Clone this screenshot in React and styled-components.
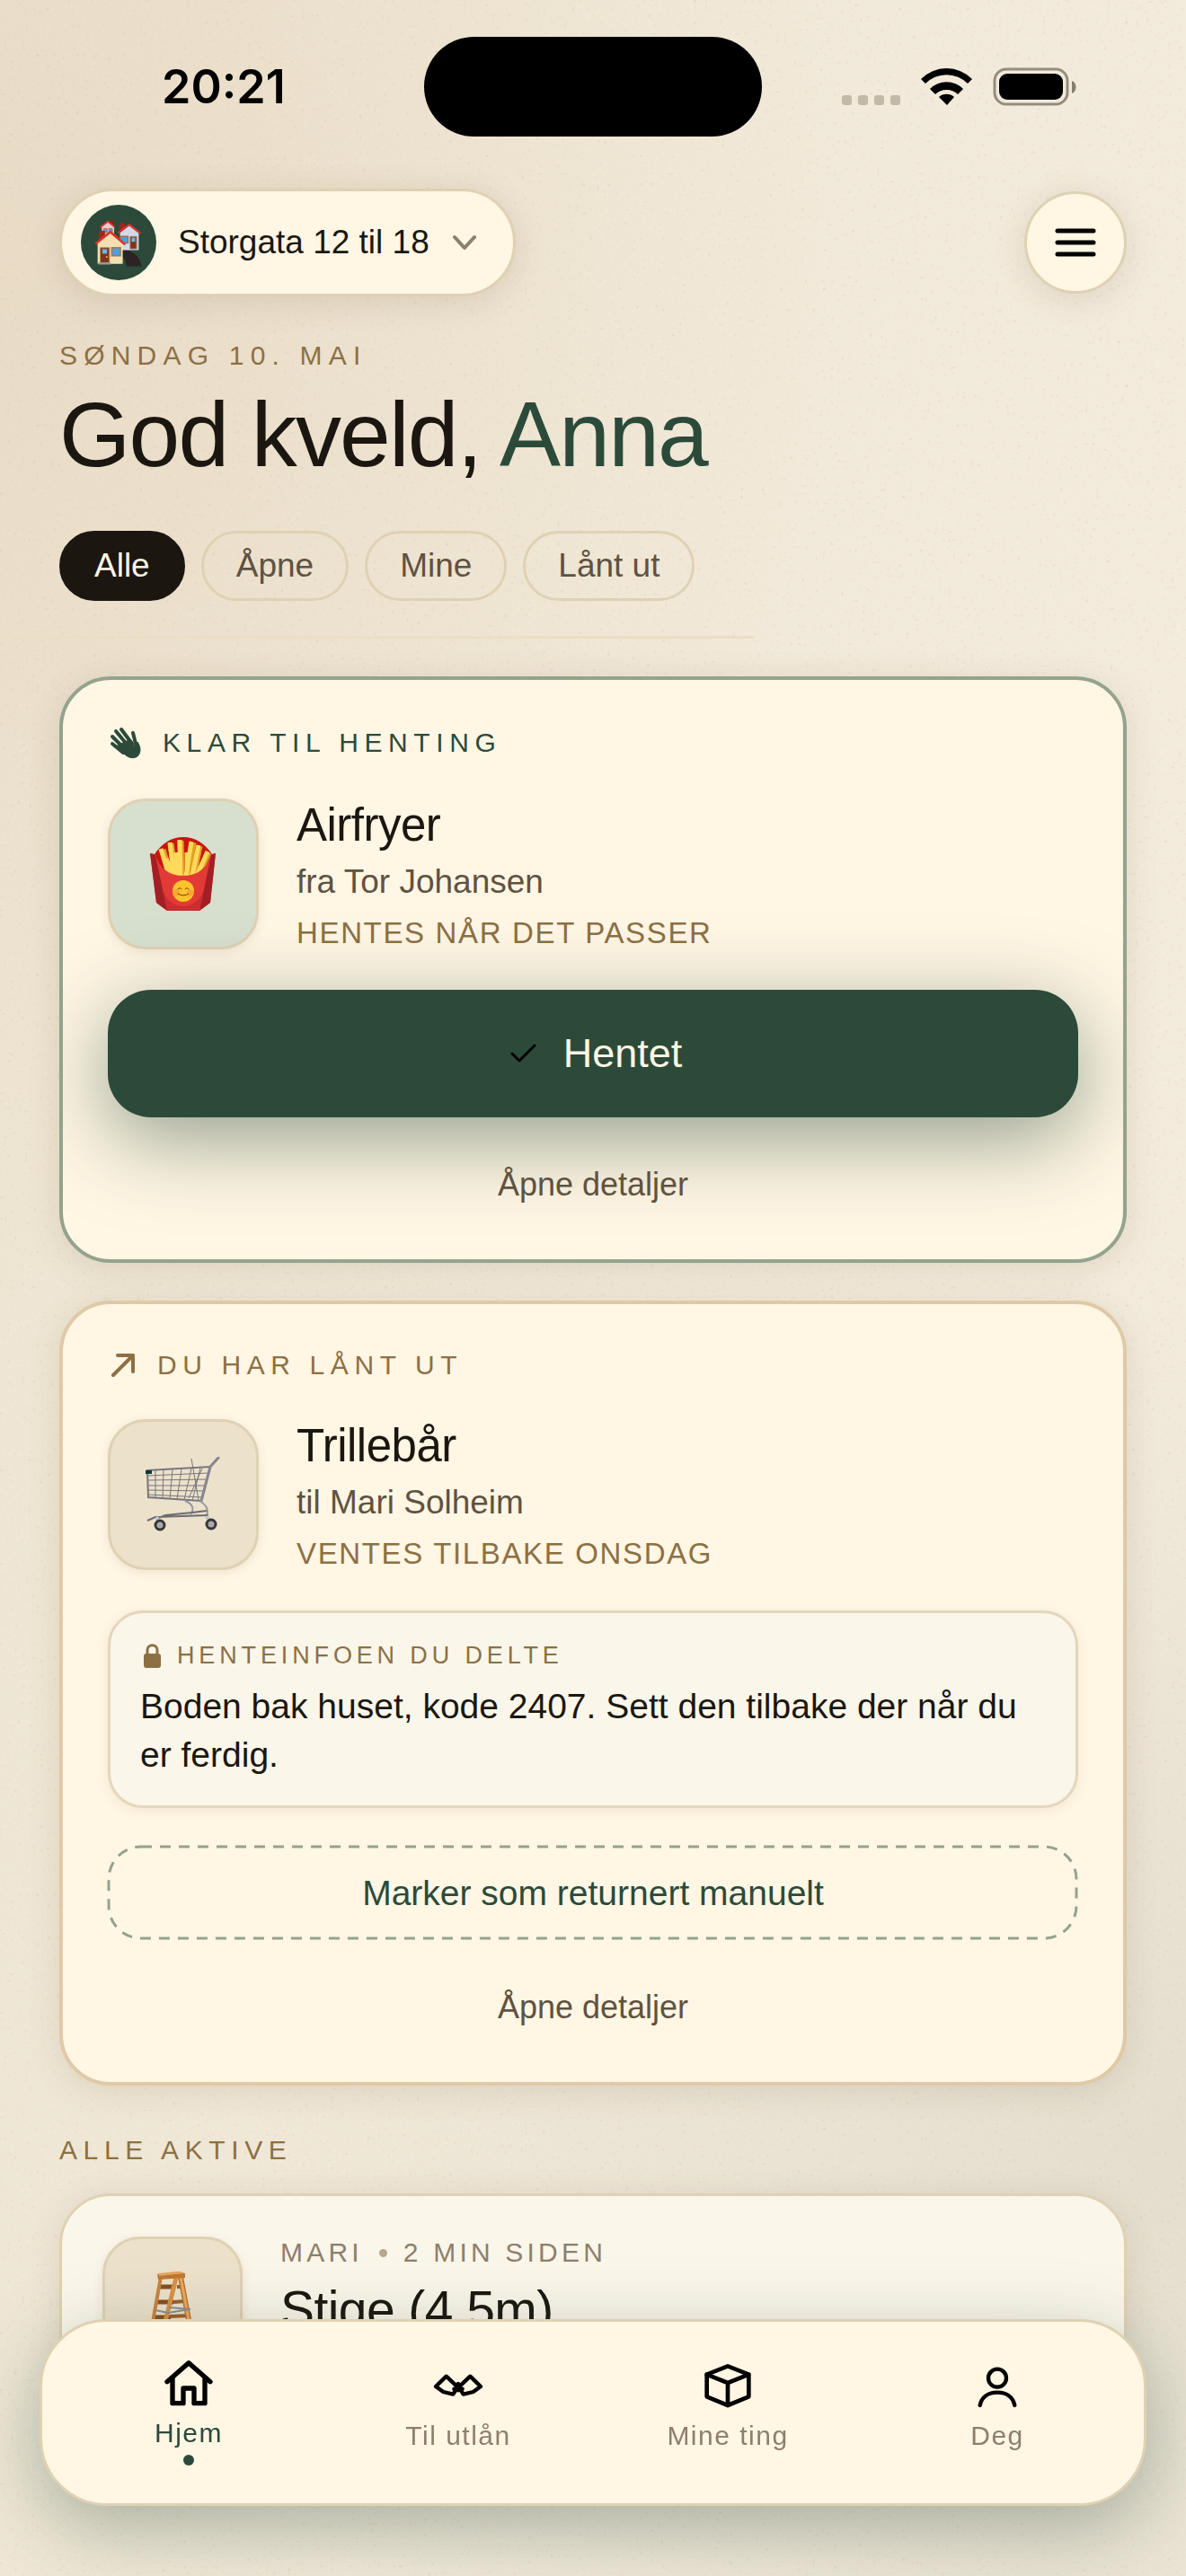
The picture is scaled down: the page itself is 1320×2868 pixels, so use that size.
import React, { useState } from "react";
import styled, { createGlobalStyle } from "styled-components";

const ink = "#1b1710";
const green = "#2c4a3a";
const bronze = "#8c7044";
const soft = "#5f5241";
const faded = "#8e7f6b";
const cream = "#fff6e4";
const paper = "#fbf6ea";
const sand = "#dfd1b3";

const GlobalStyle = createGlobalStyle`
  * {
    box-sizing: border-box;
  }

  body {
    margin: 0;
    background: #f2eada;
    color: ${ink};
    font-family: "Liberation Sans", Arial, sans-serif;
  }

  h1, h2, h3, p {
    margin: 0;
    font-weight: 400;
  }

  button {
    font-family: inherit;
    cursor: pointer;
  }
`;

const Page = styled.div`
  position: relative;
  isolation: isolate;
  min-height: 100vh;
  padding-bottom: 150px;
  overflow: hidden;
  background:
    radial-gradient(ellipse 70% 42% at 0% 10%, rgba(216, 180, 150, 0.2), transparent),
    radial-gradient(ellipse 80% 34% at 100% 84%, rgba(128, 134, 112, 0.13), transparent),
    linear-gradient(100deg, #ede5d2, #f3ebdc 75%);
`;

const Grain = styled.svg`
  position: absolute;
  inset: 0;
  z-index: -1;
  width: 100%;
  height: 100%;
`;

const StatusBar = styled.div`
  display: grid;
  grid-template-columns: 1fr 376px 1fr;
  align-items: center;
  padding-top: 41px;
`;

const Clock = styled.time`
  padding-left: 180px;
  color: #000;
  font-family: Inter, sans-serif;
  font-size: 52px;
  font-weight: 600;
  line-height: 60px;
`;

const Island = styled.div`
  height: 111px;
  border-radius: 56px;
  background: #000;
`;

const StatusIcons = styled.svg`
  justify-self: end;
  width: 264px;
  height: 45px;
  margin-right: 120px;
`;

const Header = styled.header`
  padding: 58px 66px 0;
`;

const TopRow = styled.div`
  display: flex;
  align-items: center;
  justify-content: space-between;
`;

const PlaceButton = styled.button`
  display: flex;
  align-items: center;
  height: 120px;
  padding: 0 36px 0 21px;
  border: 3px solid ${sand};
  border-radius: 60px;
  background: ${cream};
  color: ${ink};
  font-size: 37px;
  box-shadow: 0 6px 36px rgba(90, 70, 40, 0.14);
`;

const Avatar = styled.span`
  display: grid;
  place-items: center;
  width: 84px;
  height: 84px;
  margin-right: 24px;
  border-radius: 50%;
  background: ${green};
`;

const Chevron = styled.svg`
  width: 36px;
  height: 36px;
  margin-left: 21px;
`;

const MenuButton = styled.button`
  display: grid;
  place-items: center;
  width: 114px;
  height: 114px;
  padding: 0;
  border: 3px solid ${sand};
  border-radius: 50%;
  background: ${cream};
  box-shadow: 0 6px 36px rgba(90, 70, 40, 0.14);
`;

const Eyebrow = styled.p`
  color: ${({ $color }) => $color || bronze};
  font-size: 30px;
  line-height: 36px;
  letter-spacing: 0.22em;
  text-transform: uppercase;
`;

const DateLine = styled(Eyebrow)`
  margin-top: 48px;
  letter-spacing: 0.24em;
`;

const Greeting = styled.h1`
  margin-top: 14px;
  font-size: 102px;
  line-height: 112px;
  letter-spacing: -0.018em;

  span {
    color: ${green};
  }
`;

const Filters = styled.div`
  display: flex;
  gap: 18px;
  margin-top: 51px;
`;

const Chip = styled.button`
  height: 78px;
  padding: 0 36px;
  border: 3px solid ${({ $active }) => ($active ? ink : sand)};
  border-radius: 39px;
  background: ${({ $active }) => ($active ? ink : "transparent")};
  color: ${({ $active }) => ($active ? cream : soft)};
  font-size: 37px;
`;

const Rule = styled.hr`
  max-width: 840px;
  height: 3px;
  margin: 39px 0 0;
  border: 0;
  background: #eadec4;
`;

const Feed = styled.main`
  display: flex;
  flex-direction: column;
  gap: 42px;
  padding: 42px 66px 0;
`;

const Card = styled.article`
  display: flex;
  flex-direction: column;
  gap: 42px;
  padding: 50px;
  border: 4px solid ${({ $border }) => $border};
  border-radius: 57px;
  background: ${cream};
  box-shadow: 0 6px 36px rgba(90, 70, 40, 0.13);
  overflow: hidden;
`;

const CardLabel = styled.div`
  display: flex;
  align-items: center;
  gap: 21px;
`;

const ItemRow = styled.div`
  display: flex;
  align-items: flex-start;
  gap: 42px;
`;

const Tile = styled.div`
  display: grid;
  flex: none;
  place-items: center;
  width: ${({ $size }) => $size || 168}px;
  height: ${({ $size }) => $size || 168}px;
  border: 3px solid ${sand};
  border-radius: 42px;
  background: ${({ $bg }) => $bg || "#ece1cb"};
  box-shadow: 0 3px 12px rgba(90, 70, 40, 0.1);
`;

const ItemName = styled.h2`
  font-size: 51px;
  line-height: 60px;
  letter-spacing: -0.01em;
`;

const Person = styled.p`
  margin-top: 12px;
  color: ${soft};
  font-size: 37px;
  line-height: 42px;
`;

const Due = styled.p`
  margin-top: 15px;
  color: ${bronze};
  font-size: 33px;
  line-height: 42px;
  letter-spacing: 0.05em;
  text-transform: uppercase;
`;

const PrimaryButton = styled.button`
  display: flex;
  align-items: center;
  justify-content: center;
  gap: 24px;
  height: 142px;
  border: 0;
  border-radius: 48px;
  background: ${green};
  color: ${cream};
  font-size: 45px;
  box-shadow: 0 24px 90px rgba(44, 74, 58, 0.5);
`;

const DashedButton = styled.button`
  position: relative;
  height: 105px;
  padding: 0;
  border: 0;
  background: transparent;
  color: ${green};
  font-size: 39px;
`;

const DashedOutline = styled.svg`
  position: absolute;
  inset: 0;
  width: 100%;
  height: 100%;
  overflow: visible;

  rect {
    x: 1px;
    y: 1px;
    width: calc(100% - 3px);
    height: calc(100% - 3px);
  }
`;

const TextButton = styled.button`
  align-self: center;
  height: 66px;
  padding: 0 36px;
  border: 0;
  background: transparent;
  color: ${soft};
  font-size: 36px;
`;

const Note = styled.section`
  padding: 29px 33px;
  border: 3px solid #e4d6bc;
  border-radius: 39px;
  background: ${paper};
  box-shadow: 0 3px 15px rgba(90, 70, 40, 0.08);
`;

const NoteLabel = styled.h3`
  display: flex;
  align-items: center;
  gap: 14px;
  color: ${bronze};
  font-size: 27px;
  line-height: 36px;
  letter-spacing: 0.18em;
  text-transform: uppercase;
`;

const NoteText = styled.p`
  margin-top: 12px;
  font-size: 39px;
  line-height: 54px;
`;

const SectionLabel = styled(Eyebrow)`
  margin-top: 12px;
`;

const ListCard = styled.article`
  display: flex;
  align-items: flex-start;
  gap: 42px;
  margin-top: -12px;
  padding: 45px;
  border: 3px solid ${sand};
  border-radius: 57px;
  background: ${paper};
  box-shadow: 0 6px 36px rgba(90, 70, 40, 0.13);
`;

const Meta = styled.p`
  display: flex;
  align-items: center;
  gap: 18px;
  color: ${faded};
  font-size: 30px;
  line-height: 36px;
  letter-spacing: 0.14em;
  text-transform: uppercase;
`;

const Bullet = styled.i`
  width: 9px;
  height: 9px;
  border-radius: 50%;
  background: #b5a88f;
`;

const ListTitle = styled.h2`
  margin-top: 12px;
  font-size: 57px;
  line-height: 66px;
  letter-spacing: -0.01em;
`;

const TabBar = styled.nav`
  position: fixed;
  right: 44px;
  bottom: 78px;
  left: 44px;
  display: grid;
  grid-template-columns: repeat(4, 1fr);
  align-items: center;
  padding: 36px 13px 42px;
  border: 3px solid ${sand};
  border-radius: 75px;
  background: ${cream};
  box-shadow: 0 24px 84px rgba(44, 74, 58, 0.36);
`;

const Tab = styled.a`
  display: flex;
  flex-direction: column;
  align-items: center;
  gap: 6px;
  color: ${({ $active }) => ($active ? green : faded)};
  font-size: 30px;
  line-height: 36px;
  letter-spacing: 0.05em;
  text-decoration: none;

  &::after {
    content: "";
    width: 12px;
    height: ${({ $active }) => ($active ? 12 : 6)}px;
    border-radius: 50%;
    background: ${({ $active }) => ($active ? green : "transparent")};
  }
`;

const TabIcon = styled.svg`
  width: 64px;
  height: 64px;
  fill: none;
  stroke: #000;
  stroke-linecap: round;
  stroke-linejoin: round;
`;

const Houses = () => (
  <svg width="52" height="53" viewBox="138 132 158 160" aria-hidden="true">
    <path d="M230 234c34 2 62 26 64 57h-51c-2-18-6-28-16-34z" fill="#2b2325" />
    <path d="M190 136h11v24h-11z" fill="#8e1f1c" />
    <path d="M160 154l21-15 21 15v36h-42z" fill="#efc9c4" />
    <path d="M166 164h12v12h-12zM184 164h12v12h-12z" fill="#5a9fd4" stroke="#98705c" strokeWidth="3" />
    <path d="M155 159l26-20 22 18" fill="none" stroke="#d5332e" strokeWidth="6" />
    <path d="M221 145h17v25h-17z" fill="#a3231f" />
    <path d="M222 174l31-24 32 26v60h-63z" fill="#d4d9ea" />
    <path d="M223 190h26v22h-26z" fill="#4f9fdd" stroke="#92735c" strokeWidth="4" />
    <path d="M256 190h22v42h-22z" fill="#7f351c" stroke="#a98a6d" strokeWidth="3" />
    <path d="M261 194h12v14h-12z" fill="#67b7ec" />
    <path d="M216 178l37-28 38 30" fill="none" stroke="#d5332e" strokeWidth="7" />
    <path d="M150 171h21v27h-21z" fill="#a3231f" />
    <path d="M146 212l43-34 42 34v71h-85z" fill="#f4dfb0" />
    <path d="M155 228h31v52h-31z" fill="#7f351c" stroke="#ad8960" strokeWidth="3" />
    <path d="M162 233h16v15h-16z" fill="#67b7ec" />
    <circle cx="177" cy="259" r="3" fill="#f7c534" />
    <path d="M194 228h29v27h-29z" fill="#4f9fdd" stroke="#9b7b58" strokeWidth="5" />
    <path d="M148 278h42v7h-42z" fill="#a39c8e" />
    <path d="M139 215l50-40 50 42" fill="none" stroke="#d5332e" strokeWidth="8" />
  </svg>
);

const Fries = () => (
  <svg width="74" height="82" viewBox="0 0 74 82" aria-hidden="true">
    <path d="M5 19C13 7 24 0 37 0s24 7 32 19L56 48H18z" fill="#c9140f" />
    <g stroke="#e3a024" strokeWidth="7">
      <path d="M14 14l9 30M23 7l5 38M34 4l1 40M48 6l-6 38M55 10l-7 34M65 17L53 44" />
    </g>
    <g stroke="#ffd95a" strokeWidth="5">
      <path d="M12 13l9 30M22 6l5 38M33 3l1 40M46 5l-6 38M54 9l-7 34M64 16L52 43M18 24l8 20M29 17l2 26M41 17v26" />
    </g>
    <path d="M0 18l6 1c4 16 16 24 31 24s27-8 31-24l5-1-6 55-12 9H19L7 73z" fill="#e23a37" />
    <path d="M0 18l6 2 13 62L7 73zM73 18l-5 2-13 62 12-9z" fill="#a31f25" />
    <path d="M14 60l5 22h36l5-22c-6 12-14 17-23 17S20 72 14 60z" fill="#b8272b" opacity="0.6" />
    <circle cx="37" cy="60" r="12" fill="#fdc52c" />
    <circle cx="29" cy="62" r="4" fill="#ff923a" opacity="0.6" />
    <circle cx="45" cy="62" r="4" fill="#ff923a" opacity="0.6" />
    <path d="M31 58q2-3 4 0M39 58q2-3 4 0M31 63q6 4 12 0" fill="none" stroke="#7a3b0c" strokeWidth="1" strokeLinecap="round" />
  </svg>
);

const Cart = () => (
  <svg width="84" height="84" viewBox="0 0 84 84" fill="none" stroke="#77777b" aria-hidden="true">
    <path d="M2 15l70-4-10 38-59-4z" strokeWidth="2" />
    <path d="M2 21l68-3M2 26l67-1M2 32h65M3 37l63 1M3 42l61 3" strokeWidth="1" />
    <path d="M11 15v30M20 15l-1 31M30 14l-3 33M40 14l-5 33M51 13l-8 35M61 12l-9 37" strokeWidth="1" />
    <path d="M51 2l8 46M48 46l15-33" strokeWidth="1" />
    <path d="M62 49l10-38 9-10" strokeWidth="3" stroke="#86868b" strokeLinecap="round" />
    <path d="M44 49c8 3 11 9 6 15M60 49c9 5 10 10 8 18" strokeWidth="2" stroke="#96969b" />
    <path d="M2 71l9-4 59-2M12 69l10-4 30-3 16-2" strokeWidth="2" stroke="#6c6c70" />
    <path d="M12 67l4 8M68 66l5 9" strokeWidth="4" stroke="#c4c4c8" />
    <circle cx="16" cy="76" r="5" fill="#aaa" stroke="#38363a" strokeWidth="3" />
    <circle cx="73" cy="75" r="5" fill="#aaa" stroke="#38363a" strokeWidth="3" />
    <path d="M0 15h7v4H0z" fill="#123848" stroke="none" />
  </svg>
);

const Ladder = () => (
  <svg width="54" height="78" viewBox="0 0 54 78" fill="none" aria-hidden="true">
    <path d="M12 17h18M9 34h19M7 51h18M5 67h14" stroke="#855021" strokeWidth="5" />
    <path d="M32 17h7M28 34l14-1M24 50l22-1M20 66l28-1" stroke="#9a5f2a" strokeWidth="4" />
    <path d="M31 7L14 76" stroke="#d99246" strokeWidth="5" />
    <path d="M36 6l13 69" stroke="#b9752f" strokeWidth="6" />
    <path d="M36 6l13 69" stroke="#eda95a" strokeWidth="3" />
    <path d="M14 6L2 73" stroke="#c98340" strokeWidth="4" />
    <path d="M8 43l14 3 24-4M23 40l24 2" stroke="#8d8d8b" strokeWidth="2" />
    <path d="M10 3l24-3 7 2v5l-30 2z" fill="#bd7836" />
    <path d="M11 2l23-2 6 2-28 3z" fill="#e7a65b" />
  </svg>
);

const Hand = () => (
  <svg width="40" height="40" viewBox="0 0 40 40" fill="none" stroke={green} strokeLinecap="round" aria-hidden="true">
    <path d="M5 21l12 10M5 13l15 15M9 7l14 17M15 5l12 16" strokeWidth="4" />
    <path d="M28 9l4 16" strokeWidth="4" />
    <path d="M17 20l8-4c3 4 4 7 5 9l3-6c4 6 4 12 0 16-4 3-10 2-14-2-4-3-6-7-8-10z" fill={green} strokeWidth="1" strokeLinejoin="round" />
  </svg>
);

const Arrow = () => (
  <svg width="34" height="34" fill="none" stroke={bronze} strokeWidth="4" strokeLinecap="round" strokeLinejoin="round" aria-hidden="true">
    <path d="M6 28L28 6M11 6h17v18" />
  </svg>
);

const Lock = () => (
  <svg width="27" height="30" fill="none" aria-hidden="true">
    <path d="M8 14V9c0-7 11-7 11 0v5" stroke={bronze} strokeWidth="3" />
    <rect x="4" y="13" width="19" height="16" rx="3" fill={bronze} />
  </svg>
);

const tabs = [
  {
    label: "Hjem",
    icon: (
      <g strokeWidth="16">
        <path d="M24 92l72-63 72 63" />
        <path d="M42 80v84h36v-50h36v50h36V80" />
      </g>
    ),
  },
  {
    label: "Til utlån",
    icon: (
      <g strokeWidth="13">
        <path d="M21 99l35-34 38 36-15 24-33-8z" />
        <path d="M171 99l-35-34-38 36 15 24 33-8z" />
        <path d="M96 90v22M82 107h28" />
      </g>
    ),
  },
  {
    label: "Mine ting",
    icon: (
      <g strokeWidth="14">
        <path d="M96 31l70 28v74l-70 29-70-29V59z" />
        <path d="M26 59l70 28 70-28M96 87v75" />
      </g>
    ),
  },
  {
    label: "Deg",
    icon: (
      <g strokeWidth="13">
        <circle cx="96" cy="71" r="30" />
        <path d="M38 162c6-28 28-43 58-43s52 15 58 43" />
      </g>
    ),
  },
];

const filters = ["Alle", "Åpne", "Mine", "Lånt ut"];

const Item = ({ icon, bg, name, person, due }) => (
  <ItemRow>
    <Tile $bg={bg}>{icon}</Tile>
    <div>
      <ItemName>{name}</ItemName>
      <Person>{person}</Person>
      <Due>{due}</Due>
    </div>
  </ItemRow>
);

const App = () => {
  const [filter, setFilter] = useState("Alle");
  const [tab, setTab] = useState("Hjem");

  return (
    <Page>
      <GlobalStyle />
      <Grain aria-hidden="true">
        <filter id="grain">
          <feTurbulence type="fractalNoise" baseFrequency="0.25" numOctaves="2" seed="4" />
          <feColorMatrix values="0 0 0 0 0.5  0 0 0 0 0.42  0 0 0 0 0.3  0 0 0 4 -2.6" />
        </filter>
        <rect width="100%" height="100%" filter="url(#grain)" opacity="0.25" />
      </Grain>

      <StatusBar>
        <Clock>20:21</Clock>
        <Island />
        <StatusIcons viewBox="0 0 264 45" aria-hidden="true">
          <g fill="#c2b9a9">
            <rect x="1" y="32" width="11" height="11" rx="3" />
            <rect x="19" y="32" width="11" height="11" rx="3" />
            <rect x="37" y="32" width="11" height="11" rx="3" />
            <rect x="55" y="32" width="11" height="11" rx="3" />
          </g>
          <path d="M89 14a40 40 0 0 1 57 0l-5 5a33 33 0 0 0-47 0zM99 25a26 26 0 0 1 37 0l-6 6a18 18 0 0 0-25 0zM109 34a13 13 0 0 1 17 0l-8 9z" />
          <rect x="171" y="3" width="81" height="39" rx="13" fill="none" stroke="#938d80" strokeWidth="3" />
          <rect x="176" y="8" width="71" height="29" rx="9" />
          <path d="M257 16c6 2 6 12 0 14z" fill="#857f73" />
        </StatusIcons>
      </StatusBar>

      <Header>
        <TopRow>
          <PlaceButton>
            <Avatar>
              <Houses />
            </Avatar>
            Storgata 12 til 18
            <Chevron viewBox="0 0 36 36" fill="none" stroke={faded} strokeWidth="4" strokeLinecap="round" strokeLinejoin="round">
              <path d="M7 12l11 12 11-12" />
            </Chevron>
          </PlaceButton>
          <MenuButton aria-label="Meny">
            <svg width="48" height="36" stroke="#000" strokeWidth="5" strokeLinecap="round">
              <path d="M4 5h40M4 18h40M4 31h40" />
            </svg>
          </MenuButton>
        </TopRow>
        <DateLine>Søndag 10. mai</DateLine>
        <Greeting>
          God kveld, <span>Anna</span>
        </Greeting>
        <Filters>
          {filters.map((name) => (
            <Chip key={name} $active={name === filter} onClick={() => setFilter(name)}>
              {name}
            </Chip>
          ))}
        </Filters>
      </Header>
      <Rule />

      <Feed>
        <Card $border="#94a38e">
          <CardLabel>
            <Hand />
            <Eyebrow $color={green}>Klar til henting</Eyebrow>
          </CardLabel>
          <Item icon={<Fries />} bg="#d7dfcf" name="Airfryer" person="fra Tor Johansen" due="Hentes når det passer" />
          <PrimaryButton>
            <svg width="42" height="36" fill="none" stroke="#000" strokeWidth="3" strokeLinecap="round" strokeLinejoin="round" aria-hidden="true">
              <path d="M9 18l8 8 17-17" />
            </svg>
            Hentet
          </PrimaryButton>
          <TextButton>Åpne detaljer</TextButton>
        </Card>

        <Card $border="#dfc9a7">
          <CardLabel>
            <Arrow />
            <Eyebrow>Du har lånt ut</Eyebrow>
          </CardLabel>
          <Item icon={<Cart />} name="Trillebår" person="til Mari Solheim" due="Ventes tilbake onsdag" />
          <Note>
            <NoteLabel>
              <Lock />
              Henteinfoen du delte
            </NoteLabel>
            <NoteText>Boden bak huset, kode 2407. Sett den tilbake der når du er ferdig.</NoteText>
          </Note>
          <DashedButton>
            <DashedOutline aria-hidden="true">
              <rect rx="36" fill="none" stroke="#94a38e" strokeWidth="3" strokeDasharray="12 9" />
            </DashedOutline>
            Marker som returnert manuelt
          </DashedButton>
          <TextButton>Åpne detaljer</TextButton>
        </Card>

        <SectionLabel>Alle aktive</SectionLabel>
        <ListCard>
          <Tile $size={156}>
            <Ladder />
          </Tile>
          <div>
            <Meta>
              Mari <Bullet /> 2 min siden
            </Meta>
            <ListTitle>Stige (4,5m)</ListTitle>
          </div>
        </ListCard>
      </Feed>

      <TabBar>
        {tabs.map(({ label, icon }) => (
          <Tab key={label} href="#" $active={label === tab} onClick={() => setTab(label)}>
            <TabIcon viewBox="0 0 192 192" aria-hidden="true">
              {icon}
            </TabIcon>
            {label}
          </Tab>
        ))}
      </TabBar>
    </Page>
  );
};

export default App;
